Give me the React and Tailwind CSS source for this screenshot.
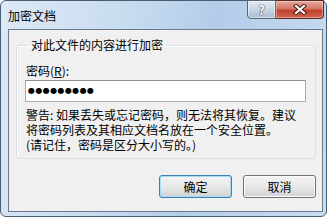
export default function App() {
  return (
    <div className="w-[330px] h-[218px] bg-white text-[12px] text-black font-['Segoe_UI','Noto_Sans_CJK_SC',sans-serif]">
      <div className="w-[327px] h-[217px] rounded-[6px] border border-[#4b5d70] bg-[linear-gradient(100deg,#dce9f6_0%,#c8dcf0_35%,#b3cde9_60%,#c9dcf0_100%)] flex flex-col">
        {/* title bar */}
        <div className="h-[28px] flex items-start">
          <span className="ml-[7px] mt-[7px] leading-[16px]">加密文档</span>
          <div className="ml-auto mr-[2px] flex h-[19px] -mt-px">
            <div className="w-[29px] h-full flex items-center justify-center border border-[#56677a] rounded-bl-[4px] bg-gradient-to-b from-[#e3ebf4] via-[#c9d6e4] to-[#a9bccf] shadow-[inset_0_0_0_1px_rgba(255,255,255,0.5)]">
              <span className="text-white font-bold text-[13px] leading-none [text-shadow:0_0_1px_#222,0_0_1px_#222]">?</span>
            </div>
            <div className="w-[48px] h-full flex items-center justify-center border border-l-0 border-[#5a2a22] rounded-br-[4px] bg-[linear-gradient(180deg,#e8a89c_0%,#d47866_45%,#c2402c_55%,#d4664f_100%)] shadow-[inset_0_0_0_1px_rgba(255,255,255,0.35)]">
              <svg width="14" height="11" viewBox="0 0 14 11">
                <path d="M3 2 L11 9 M11 2 L3 9" stroke="#4a1c14" strokeWidth="4.2" strokeLinecap="square" />
                <path d="M3 2 L11 9 M11 2 L3 9" stroke="#ffffff" strokeWidth="2.2" strokeLinecap="square" />
              </svg>
            </div>
          </div>
        </div>

        {/* client area */}
        <div className="ml-[7px] w-[315px] h-[183px] border border-[#6c7b8b] bg-[#f0f0f0] pl-[7px] pr-[6px] pt-[7px]">
          <fieldset className="border border-[#d5dfe5] rounded-[3px] pl-[8px] pr-[9px] pb-[6px] shadow-[inset_1px_1px_0_#fff]">
            <legend className="ml-[3px] px-[3px] leading-[16px]">对此文件的内容进行加密</legend>
            <div className="mt-[10px] leading-[16px] pl-px">
              密码(<span className="underline">R</span>):
            </div>
            <div className="mt-px h-[22px] bg-white border border-[#abadb3] border-t-[#8e8f8f] flex items-center pl-[2px]">
              <span className="font-['DejaVu_Sans',sans-serif] text-[8px] tracking-[0.4px] leading-none">●●●●●●●●●</span>
            </div>
            <div className="mt-[5px] leading-[15px] pl-px flex flex-col">
              <span>警告: 如果丢失或忘记密码，则无法将其恢复。建议</span>
              <span>将密码列表及其相应文档名放在一个安全位置。</span>
              <span>(请记住，密码是区分大小写的。)</span>
            </div>
          </fieldset>

          <div className="mt-[16px] flex justify-end gap-[11px]">
            <button className="w-[73px] h-[23px] rounded-[3px] border border-[#3c7fb1] bg-gradient-to-b from-[#f4f4f4] via-[#e8e8e8] to-[#d2d2d2] shadow-[inset_0_0_0_1px_#a6dcf5] leading-none">
              确定
            </button>
            <button className="w-[73px] h-[23px] rounded-[3px] border border-[#707070] bg-gradient-to-b from-[#f4f4f4] via-[#e8e8e8] to-[#d2d2d2] shadow-[inset_0_0_0_1px_#fcfcfc] leading-none">
              取消
            </button>
          </div>
        </div>
      </div>
    </div>
  );
}
